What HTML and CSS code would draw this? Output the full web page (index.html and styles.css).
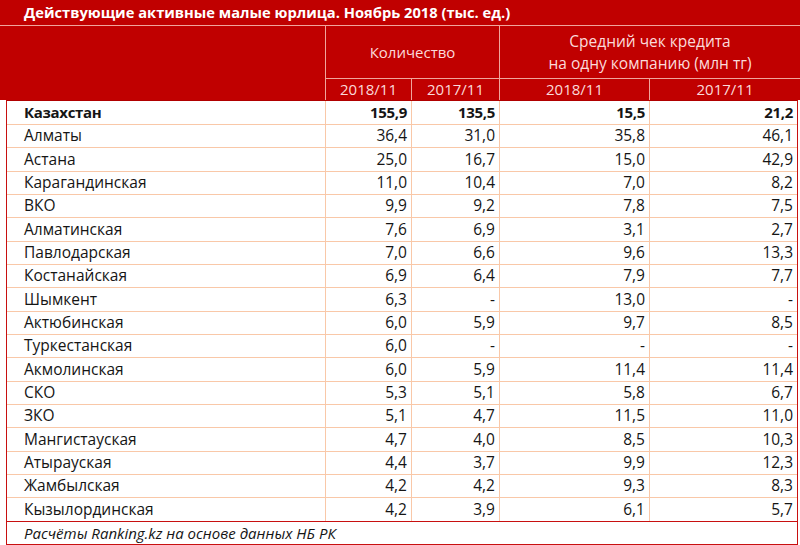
FILE: index.html
```html
<!DOCTYPE html>
<html lang="ru">
<head>
<meta charset="utf-8">
<link rel="stylesheet" href="styles.css">
</head>
<body>
<div class="sheet">
  <div class="title">Действующие активные малые юрлица. Ноябрь 2018 (тыс. ед.)</div>
  <div class="head">
    <div class="h-blank"></div>
    <div class="h-group h-qty">Количество</div>
    <div class="h-group h-avg">Средний чек кредита<br>на одну компанию (млн тг)</div>
    <div class="h-year">2018/11</div>
    <div class="h-year">2017/11</div>
    <div class="h-year">2018/11</div>
    <div class="h-year h-last">2017/11</div>
  </div>
  <div class="body">
    <div class="row total"><div class="c name">Казахстан</div><div class="c">155,9</div><div class="c">135,5</div><div class="c">15,5</div><div class="c">21,2</div></div>
    <div class="row"><div class="c name">Алматы</div><div class="c">36,4</div><div class="c">31,0</div><div class="c">35,8</div><div class="c">46,1</div></div>
    <div class="row"><div class="c name">Астана</div><div class="c">25,0</div><div class="c">16,7</div><div class="c">15,0</div><div class="c">42,9</div></div>
    <div class="row"><div class="c name">Карагандинская</div><div class="c">11,0</div><div class="c">10,4</div><div class="c">7,0</div><div class="c">8,2</div></div>
    <div class="row"><div class="c name">ВКО</div><div class="c">9,9</div><div class="c">9,2</div><div class="c">7,8</div><div class="c">7,5</div></div>
    <div class="row"><div class="c name">Алматинская</div><div class="c">7,6</div><div class="c">6,9</div><div class="c">3,1</div><div class="c">2,7</div></div>
    <div class="row"><div class="c name">Павлодарская</div><div class="c">7,0</div><div class="c">6,6</div><div class="c">9,6</div><div class="c">13,3</div></div>
    <div class="row"><div class="c name">Костанайская</div><div class="c">6,9</div><div class="c">6,4</div><div class="c">7,9</div><div class="c">7,7</div></div>
    <div class="row"><div class="c name">Шымкент</div><div class="c">6,3</div><div class="c">-</div><div class="c">13,0</div><div class="c">-</div></div>
    <div class="row"><div class="c name">Актюбинская</div><div class="c">6,0</div><div class="c">5,9</div><div class="c">9,7</div><div class="c">8,5</div></div>
    <div class="row"><div class="c name">Туркестанская</div><div class="c">6,0</div><div class="c">-</div><div class="c">-</div><div class="c">-</div></div>
    <div class="row"><div class="c name">Акмолинская</div><div class="c">6,0</div><div class="c">5,9</div><div class="c">11,4</div><div class="c">11,4</div></div>
    <div class="row"><div class="c name">СКО</div><div class="c">5,3</div><div class="c">5,1</div><div class="c">5,8</div><div class="c">6,7</div></div>
    <div class="row"><div class="c name">ЗКО</div><div class="c">5,1</div><div class="c">4,7</div><div class="c">11,5</div><div class="c">11,0</div></div>
    <div class="row"><div class="c name">Мангистауская</div><div class="c">4,7</div><div class="c">4,0</div><div class="c">8,5</div><div class="c">10,3</div></div>
    <div class="row"><div class="c name">Атырауская</div><div class="c">4,4</div><div class="c">3,7</div><div class="c">9,9</div><div class="c">12,3</div></div>
    <div class="row"><div class="c name">Жамбылская</div><div class="c">4,2</div><div class="c">4,2</div><div class="c">9,3</div><div class="c">8,3</div></div>
    <div class="row last"><div class="c name">Кызылординская</div><div class="c">4,2</div><div class="c">3,9</div><div class="c">6,1</div><div class="c">5,7</div></div>
    <div class="foot">Расчёты Ranking.kz на основе данных НБ РК</div>
  </div>
</div>
</body>
</html>
```

FILE: styles.css
```css
* { box-sizing: border-box; }
html, body { margin: 0; padding: 0; background: #fff; }
body {
  width: 800px;
  height: 545px;
  overflow: hidden;
  font-family: "Open Sans", "Noto Sans", sans-serif;
}
.sheet { width: 800px; }
.title {
  height: 26px;
  background: #c00000;
  border-bottom: 1px solid #f0a59c;
  color: #fff;
  font-weight: 700;
  font-size: 14.7px;
  line-height: 24px;
  padding-left: 24px;
}
.head {
  display: grid;
  grid-template-columns: 326px 86px 88px 150px 150px;
  grid-template-rows: 53px 21px;
  background: #c00000;
  color: #fbdada;
  font-size: 15px;
}
.h-blank { grid-row: 1 / 3; grid-column: 1; border-right: 1px solid #f0a59c; }
.h-group {
  display: flex;
  align-items: center;
  justify-content: center;
  text-align: center;
  border-bottom: 1px solid #f0a59c;
  line-height: 22px;
}
.h-qty { grid-column: 2 / 4; border-right: 1px solid #f0a59c; }
.h-avg { grid-column: 4 / 6; padding-bottom: 1px; font-size: 15.5px; }
.h-year {
  text-align: center;
  line-height: 21px;
  border-right: 1px solid #f0a59c;
}
.h-last { border-right: none; }
.body {
  margin: 0 2px 0 6px;
  border-left: 1px solid #c81010;
  border-right: 1px solid #c81010;
  border-bottom: 1px solid #c81010;
  border-top: 1px solid #b00000;
  color: #151515;
  font-size: 15.5px;
}
.row {
  display: grid;
  grid-template-columns: 319px 86px 88px 150px 147px;
  height: 23.333px;
}
.c {
  text-align: right;
  padding-right: 4px;
  border-right: 1px solid #f9c8a8;
  border-bottom: 1px solid #f9c8a8;
  line-height: 23px;
}
.c:last-child { border-right: none; }
.c.name { text-align: left; padding-left: 17px; }
.total .c { font-weight: 700; font-size: 15px; letter-spacing: -0.3px; }
.row.last .c { border-bottom: none; }
.foot {
  border-top: 1px solid #c81010;
  height: 23px;
  line-height: 22px;
  font-style: italic;
  padding-left: 17px;
  font-size: 15px;
}
```
